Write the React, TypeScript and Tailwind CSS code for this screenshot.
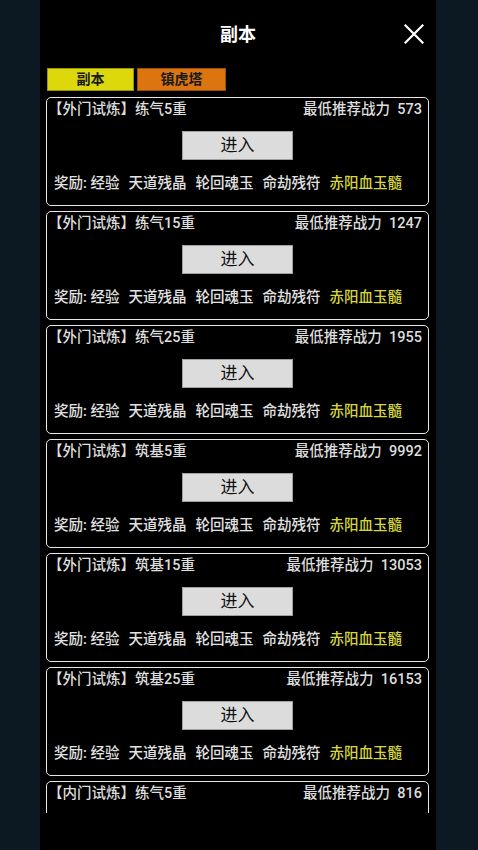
import React from "react";

const cards = [
  { tag: "【外门试炼】", name: "练气5重", power: 573 },
  { tag: "【外门试炼】", name: "练气15重", power: 1247 },
  { tag: "【外门试炼】", name: "练气25重", power: 1955 },
  { tag: "【外门试炼】", name: "筑基5重", power: 9992 },
  { tag: "【外门试炼】", name: "筑基15重", power: 13053 },
  { tag: "【外门试炼】", name: "筑基25重", power: 16153 },
  { tag: "【内门试炼】", name: "练气5重", power: 816, clipped: true },
];

const font = { fontFamily: 'Roboto, "Noto Sans CJK SC", "Noto Sans", sans-serif' };

function Card({ tag, name, power, clipped }: { tag: string; name: string; power: number; clipped?: boolean }) {
  return (
    <div className="shrink-0 h-[109px] border-[1.5px] border-[#e8e8e8] rounded-[5px] flex flex-col">
      <div className="mt-[2px] h-[20px] flex justify-between items-center pl-[1px] pr-[6px] text-[14.5px] leading-[20px] font-medium text-[#dedede]">
        <span>
          {tag}
          {name}
        </span>
        <span>最低推荐战力&nbsp;&nbsp;{power}</span>
      </div>
      {!clipped && (
        <>
          <div className="mt-[11px] flex justify-center">
            <div className="w-[111px] h-[29px] bg-[#dcdcdc] border border-[#a0a0a0] flex items-center justify-center text-[17px] text-[#111]">
              进入
            </div>
          </div>
          <div className="mt-[14px] h-[20px] flex items-center gap-[9px] pl-[7px] text-[14.5px] leading-[20px] font-medium text-[#e2e2e2]">
            <span>奖励: 经验</span>
            <span>天道残晶</span>
            <span>轮回魂玉</span>
            <span>命劫残符</span>
            <span className="text-[#d6d640]">赤阳血玉髓</span>
          </div>
        </>
      )}
    </div>
  );
}

export default function App() {
  return (
    <div className="w-full h-[850px] bg-[#0c1822] pl-[40px]" style={font}>
      <div className="w-[396px] h-full bg-black flex flex-col">
        <div className="h-[68px] relative flex items-start justify-center">
          <div className="mt-[23px] text-[18px] leading-[24px] font-bold text-white">副本</div>
          <svg
            className="absolute left-[364px] top-[24px]"
            width="20"
            height="20"
            viewBox="0 0 20 20"
          >
            <path d="M1.5 1.5 L18.5 18.5 M18.5 1.5 L1.5 18.5" stroke="#fff" strokeWidth="2.2" strokeLinecap="square" />
          </svg>
        </div>
        <div className="h-[23px] flex pl-[7px] gap-[3px]">
          <div className="w-[87px] h-full bg-[#dcd80c] border border-[#9a960a] flex items-center justify-center text-[14px] font-bold text-[#1a1a1a]">
            副本
          </div>
          <div className="w-[89px] h-full bg-[#dc7410] border border-[#9a500a] flex items-center justify-center text-[14px] font-bold text-[#1a1a1a]">
            镇虎塔
          </div>
        </div>
        <div className="mt-[6px] h-[716px] overflow-hidden pl-[6px] pr-[7px] flex flex-col gap-[5px]">
          {cards.map((c, i) => (
            <Card key={i} {...c} />
          ))}
        </div>
      </div>
    </div>
  );
}
